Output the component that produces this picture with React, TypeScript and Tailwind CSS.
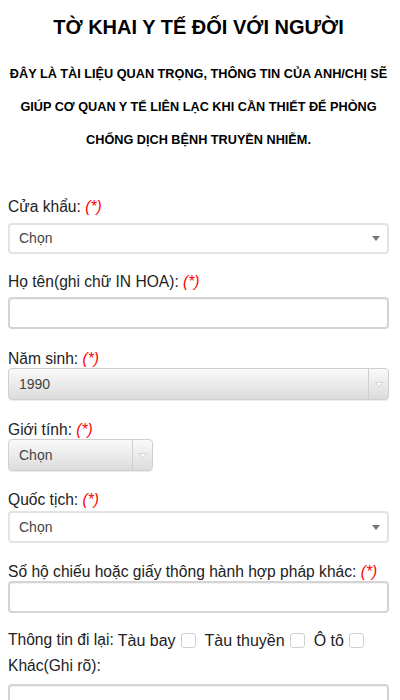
import React from "react";

function Req() {
  return <span className="italic text-[#ff0000]"> (*)</span>;
}

function Label({ text, req = true, className = "" }: { text: string; req?: boolean; className?: string }) {
  return (
    <div className={`text-[15.6px] leading-[18px] text-[#222] ${className}`}>
      {text}
      {req && <Req />}
    </div>
  );
}

function PlainSelect({ value, className = "" }: { value: string; className?: string }) {
  return (
    <div
      className={`h-[31px] w-full flex items-center justify-between rounded-[4px] border-2 border-[#e3e3e3] bg-white pl-[9px] pr-[7px] ${className}`}
    >
      <span className="text-[14px] text-[#444]">{value}</span>
      <svg width="8" height="5" viewBox="0 0 8 5">
        <path d="M0 0h8L4 5z" fill="#777" />
      </svg>
    </div>
  );
}

function GreySelect({ value, width }: { value: string; width: string }) {
  return (
    <div
      className={`h-[32px] ${width} flex items-stretch rounded-[4px] border border-[#cfcfcf] bg-gradient-to-b from-[#fafafa] to-[#dcdcdc] shadow-[0_1px_1px_rgba(0,0,0,0.08)]`}
    >
      <span className="flex-1 flex items-center pl-[10px] text-[14px] text-[#444]">{value}</span>
      <span className="w-[20px] flex items-center justify-center border-l border-[#cfcfcf]">
        <svg width="8" height="5" viewBox="0 0 8 5">
          <path d="M0.4 0.4h7.2L4 4.6z" fill="#fff" stroke="#c4c4c4" strokeWidth="0.7" />
        </svg>
      </span>
    </div>
  );
}

function TextInput({ className = "" }: { className?: string }) {
  return (
    <div
      className={`h-[32px] w-full rounded-[4px] border-2 border-[#d4d4d4] bg-white shadow-[inset_0_1px_1px_rgba(0,0,0,0.06)] ${className}`}
    />
  );
}

function Check() {
  return <span className="inline-block w-[15px] h-[15px] rounded-[3px] border border-[#d0d0d0] bg-white ml-[5px] mr-[9px] self-center" />;
}

export default function App() {
  return (
    <div className="w-[400px] h-[700px] overflow-hidden bg-white pl-[8px] pr-[11px] font-['Liberation_Sans',Arial,sans-serif] text-[#111]">
      <h1 className="pt-[15px] text-center text-[20px] font-bold leading-[24px] text-black">
        TỜ KHAI Y TẾ ĐỐI VỚI NGƯỜI
      </h1>
      <p className="mt-[19px] text-center text-[12.7px] font-bold leading-[33px] text-black">
        ĐÂY LÀ TÀI LIỆU QUAN TRỌNG, THÔNG TIN CỦA ANH/CHỊ SẼ GIÚP CƠ QUAN Y TẾ LIÊN LẠC KHI CẦN THIẾT ĐỂ PHÒNG CHỐNG DỊCH BỆNH TRUYỀN NHIỄM.
      </p>

      <div className="mt-[41px]">
        <Label text="Cửa khẩu:" />
        <PlainSelect value="Chọn" className="mt-[7px]" />
      </div>

      <div className="mt-[19px]">
        <Label text="Họ tên(ghi chữ IN HOA):" />
        <TextInput className="mt-[6px]" />
      </div>

      <div className="mt-[21px]">
        <Label text="Năm sinh:" />
        <GreySelect value="1990" width="w-full" />
      </div>

      <div className="mt-[21px]">
        <Label text="Giới tính:" />
        <GreySelect value="Chọn" width="w-[145px]" />
      </div>

      <div className="mt-[20px]">
        <Label text="Quốc tịch:" />
        <PlainSelect value="Chọn" className="mt-[2px] h-[32px]" />
      </div>

      <div className="mt-[20px]">
        <Label text="Số hộ chiếu hoặc giấy thông hành hợp pháp khác:" />
        <TextInput />
      </div>

      <div className="mt-[16px] flex items-baseline leading-[22px]">
        <span className="text-[15.6px] text-[#222]">Thông tin đi lại:</span>
        <span className="ml-[4px] text-[16px] text-[#222] translate-y-[1px]">Tàu bay</span>
        <Check />
        <span className="text-[16px] text-[#222] translate-y-[1px]">Tàu thuyền</span>
        <Check />
        <span className="text-[16px] text-[#222] translate-y-[1px]">Ô tô</span>
        <Check />
      </div>
      <div className="mt-[5px] text-[15.6px] leading-[20px] text-[#222]">Khác(Ghi rõ):</div>
      <TextInput className="mt-[8px]" />
    </div>
  );
}
